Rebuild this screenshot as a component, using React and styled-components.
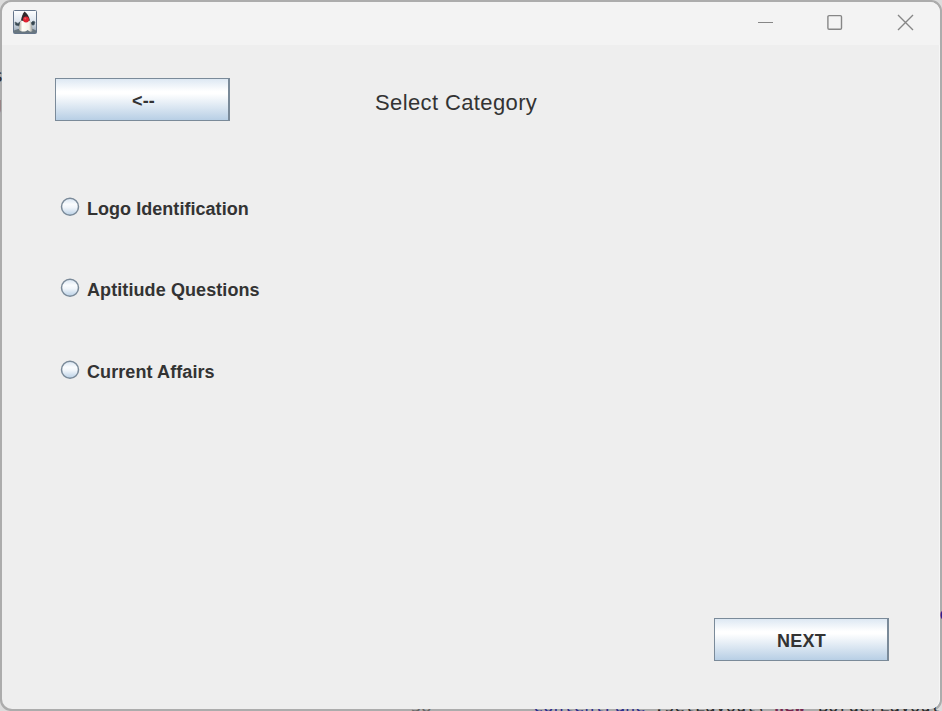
import React from 'react';
import styled, { createGlobalStyle } from 'styled-components';

const GlobalStyle = createGlobalStyle`
  * { box-sizing: border-box; }
  body { margin: 0; overflow: hidden; background: #b0b0b0; }
`;

const Desktop = styled.div`
  position: relative;
  width: 942px;
  height: 711px;
  overflow: hidden;
  padding: 2px;
  background: #acacac;
  font-family: 'Liberation Sans', Arial, sans-serif;
  color: #333;
`;

const Corner = styled.div`
  position: absolute;
  width: 10px;
  height: 10px;
  background: #dcdcdc;
  ${(p) => p.$v}: 0;
  ${(p) => p.$h}: 0;
`;

const Edge = styled.div`
  position: absolute;
  inset: 0;
  border: 2px solid #acacac;
  border-radius: 11px;
  background: #acacac;
`;

const Code = styled.div`
  position: absolute;
  left: ${(p) => p.$x}px;
  top: ${(p) => p.$y}px;
  font: ${(p) => (p.$bold ? 'bold ' : '')}17px/20px 'DejaVu Sans Mono', monospace;
  color: ${(p) => p.$color || '#292929'};
  white-space: pre;
`;

const Window = styled.main`
  position: relative;
  display: flex;
  flex-direction: column;
  width: 938px;
  height: 707px;
  overflow: hidden;
  border-radius: 10px;
  background: #eee;
  box-shadow: inset -1px 0 #f6f6f6;
`;

const TitleBar = styled.header`
  display: flex;
  flex: 0 0 43px;
  align-items: flex-start;
  justify-content: space-between;
  padding: 8px 26px 0 11px;
  background: #f3f3f3;
`;

const Controls = styled.div`
  display: flex;
  gap: 53px;
  padding-top: 4px;
`;

const Control = styled.svg`
  display: block;
  width: 17px;
  height: 17px;
  fill: none;
  stroke: #868686;
  stroke-width: 1.4;
`;

const Content = styled.section`
  display: flex;
  flex: 1;
  flex-direction: column;
  padding: 33px 51px 48px 53px;
`;

const Heading = styled.div`
  display: flex;
  align-items: flex-start;
  gap: 145px;
`;

const Title = styled.h1`
  margin: 12px 0 0;
  font-size: 22px;
  font-weight: 400;
  line-height: 26px;
  letter-spacing: 0.38px;
`;

const MetalButton = styled.button`
  width: 175px;
  height: 43px;
  padding: 3px 0 0 ${(p) => p.$shift || 0}px;
  border: 1px solid #7a8a99;
  border-right-width: 2px;
  background: linear-gradient(#dde8f3 0%, #fff 30%, #fff 36%, #b8cfe5 100%);
  color: #333;
  font: bold 18px/21px 'Liberation Sans', Arial, sans-serif;
  letter-spacing: ${(p) => p.$ls || 0}px;
  align-self: ${(p) => p.$align || 'auto'};
`;

const Options = styled.div`
  display: grid;
  grid-template-rows: 81px 82px 24px;
  flex: 1;
  margin-top: 75px;
  padding-left: 5px;
`;

const Option = styled.label`
  display: flex;
  align-items: flex-start;
  gap: 7px;
  height: 24px;
  font-size: 18px;
  font-weight: 700;
  line-height: 27px;
  letter-spacing: ${(p) => p.$ls}px;
`;

const Radio = styled.svg`
  display: block;
  width: 20px;
  height: 20px;
  margin-top: 1px;
`;

function DukeIcon() {
  return (
    <svg width="24" height="24" viewBox="0 0 24 24">
      <defs>
        <linearGradient id="tile" x2="0" y2="1">
          <stop stopColor="#fff" />
          <stop offset=".5" stopColor="#dce4ed" />
          <stop offset="1" stopColor="#8d9cab" />
        </linearGradient>
        <linearGradient id="belly">
          <stop stopColor="#aaa79b" />
          <stop offset=".25" stopColor="#fffef7" />
          <stop offset=".75" stopColor="#f3f1e8" />
          <stop offset="1" stopColor="#999b98" />
        </linearGradient>
      </defs>
      <rect x=".5" y=".5" width="23" height="23" rx="1" fill="url(#tile)" stroke="#65758a" />
      <path d="M1 20.500 5 19 20 19 23 20.500v2.500H1Z" fill="#697780" />
      <path d="M8 11 5 13.500 2 12 2.500 15 6 16 9 14M16 11 18 13 20 11 22 12 21 15 17 15" fill="#35454f" stroke="#52616a" strokeWidth=".7" />
      <path d="M8.500 9h8c2 4 3.200 8 3 12-2 1.500-3.500 0-5-1-2 2-6 2-8.500 0 0-4 .5-8 2.500-11Z" fill="url(#belly)" />
      <path d="M11.500 1.500C9.700 3.500 8.500 7 8 10.500c3 .8 6 1.300 9 0C16 6 14 3 11.500 1.500Z" fill="#30292b" />
      <circle cx="13" cy="9.400" r="3" fill="#df2431" />
      <circle cx="12.300" cy="8.500" r="1" fill="#f15b60" />
    </svg>
  );
}

function RadioMark() {
  return (
    <Radio viewBox="0 0 20 20">
      <defs>
        <linearGradient id="radio" x2="0" y2="1">
          <stop stopColor="#d7e4f1" />
          <stop offset=".35" stopColor="#fafcfe" />
          <stop offset=".55" stopColor="#f0f5fa" />
          <stop offset="1" stopColor="#b8cfe5" />
        </linearGradient>
      </defs>
      <circle cx="10" cy="9.800" r="8.500" fill="url(#radio)" stroke="#7a8a99" strokeWidth="1.500" />
    </Radio>
  );
}

const options = [
  { label: 'Logo Identification', spacing: 0.04 },
  { label: 'Aptitiude Questions', spacing: 0.09 },
  { label: 'Current Affairs', spacing: 0.09 },
];

export default function App() {
  return (
    <>
      <GlobalStyle />
      <Desktop>
        <Corner $v="top" $h="left" />
        <Corner $v="top" $h="right" />
        <Corner $v="bottom" $h="left" />
        <Corner $v="bottom" $h="right" />
        <Edge />
        <Code $x={-7} $y={66}>s</Code>
        <Code $x={-8} $y={94} $color="#987445">g</Code>
        <Code $x={939} $y={604} $color="#2c2390" $bold>c</Code>
        <Code $x={411} $y={696} $color="#666">38</Code>
        <Code $x={533} $y={696} $color="#29298c">contentPane</Code>
        <Code $x={654} $y={696}>.setLayout(</Code>
        <Code $x={774} $y={696} $color="#77264f" $bold>new</Code>
        <Code $x={818} $y={696}>BorderLayout</Code>
        <Window>
          <TitleBar>
            <DukeIcon />
            <Controls>
              <Control viewBox="0 0 17 17"><path d="M1 8.500h15" strokeWidth="1" /></Control>
              <Control viewBox="0 0 17 17"><rect x=".9" y="1.600" width="13.600" height="13.600" rx="1.200" /></Control>
              <Control viewBox="0 0 17 17"><path d="m1 1 15 15M16 1 1 16" /></Control>
            </Controls>
          </TitleBar>
          <Content>
            <Heading>
              <MetalButton $shift={3} $ls={0.2}>&lt;--</MetalButton>
              <Title>Select Category</Title>
            </Heading>
            <Options>
              {options.map((option) => (
                <Option key={option.label} $ls={option.spacing}>
                  <RadioMark />
                  {option.label}
                </Option>
              ))}
            </Options>
            <MetalButton $align="flex-end" $shift={1} $ls={0.2}>NEXT</MetalButton>
          </Content>
        </Window>
      </Desktop>
    </>
  );
}
